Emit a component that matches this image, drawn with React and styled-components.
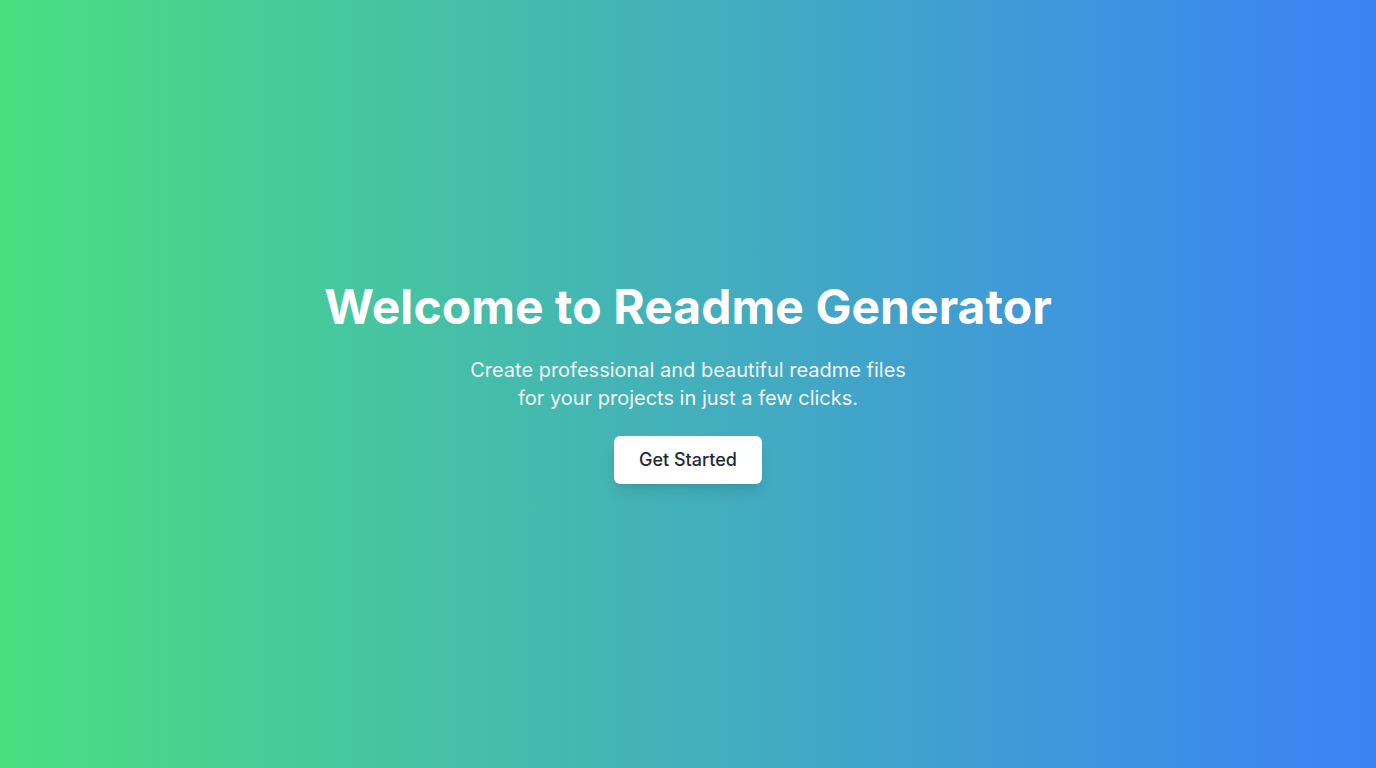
import React from "react";
import styled, { createGlobalStyle } from "styled-components";

/* --------------------- COMPONENTE PRINCIPAL --------------------- */

export default function App() {
  return (
    <>
      <GlobalStyle />
      <Hero>
        <Content>
          <Title>Welcome to Readme Generator</Title>
          <Sub>
            Create professional and beautiful readme files for your projects in just a few clicks.
          </Sub>
          <Button type="button">Get Started</Button>
        </Content>
      </Hero>
    </>
  );
}

/* --------------------- STYLES --------------------- */

const GlobalStyle = createGlobalStyle`
  html, body { margin:0; padding:0; }
  body {
    font-family: Inter, "Noto Sans", "Liberation Sans", sans-serif;
    -webkit-font-smoothing: antialiased;
  }
  * { box-sizing:border-box; }
`;

const Hero = styled.main`
  min-height:100vh;
  padding-bottom:2px;
  display:flex;
  align-items:center;
  justify-content:center;
  background:linear-gradient(to right, #4ade80, #3b82f6);
`;

const Content = styled.div`
  display:flex;
  flex-direction:column;
  align-items:center;
  text-align:center;
`;

const Title = styled.h1`
  margin:0 0 25px;
  font-size:48px;
  line-height:48px;
  font-weight:700;
  letter-spacing:0.05px;
  color:#fff;
`;

const Sub = styled.p`
  margin:0 0 24px;
  max-width:448px;
  font-size:20px;
  line-height:28px;
  color:#f3f4f6;
`;

const Button = styled.button`
  height:48px;
  padding:0 25px;
  border:0;
  border-radius:6px;
  background:#fff;
  color:#1f2937;
  font-family:inherit;
  font-size:18px;
  font-weight:500;
  line-height:28px;
  cursor:pointer;
  box-shadow:0 10px 15px -3px rgba(0,0,0,0.1), 0 4px 6px -4px rgba(0,0,0,0.1);
`;
